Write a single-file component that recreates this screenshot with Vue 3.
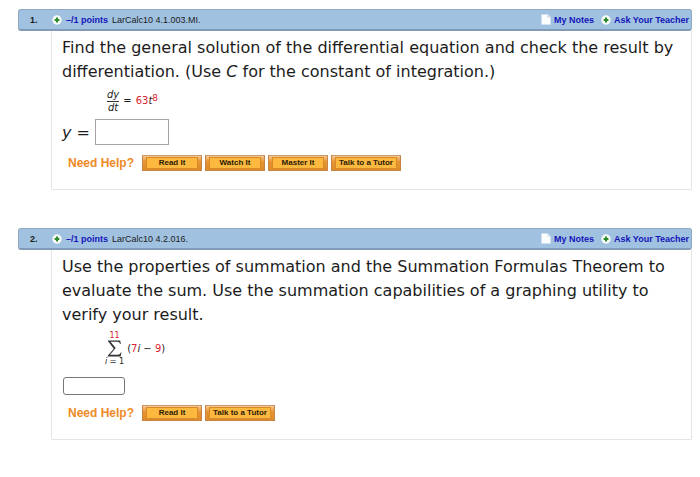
<script setup>
import { ref } from 'vue'

const antiderivative = ref('')
const sum = ref('')

const helpFirst = ['Read It', 'Watch It', 'Master It', 'Talk to a Tutor']
const helpSecond = ['Read It', 'Talk to a Tutor']

const questions = [
  { id: 1, source: 'LarCalc10 4.1.003.MI.', help: helpFirst },
  { id: 2, source: 'LarCalc10 4.2.016.', help: helpSecond },
]
</script>

<template>
  <main class="page">
    <section v-for="q in questions" :key="q.id" class="question">
      <header class="bar">
        <span class="number">{{ q.id }}.</span>
        <a href="#" class="points">
          <svg class="plus" viewBox="0 0 10 10" aria-hidden="true">
            <circle cx="5" cy="5" r="4.7" fill="#f6faf6" />
            <path d="M5 2.6V7.4M2.6 5H7.4" stroke="#2c8a2c" stroke-width="2" />
          </svg>
          <span>–/1 points</span>
        </a>
        <span class="source">{{ q.source }}</span>
        <nav class="links">
          <a href="#">
            <svg class="note" viewBox="0 0 10 11" aria-hidden="true">
              <path d="M.5 .5H6.8L9.5 3.2V10.5H.5Z" fill="#fcfdff" stroke="#d3dfec" stroke-width=".7" />
              <path d="M6.8 .5V3.2H9.5" fill="#dfe8f2" stroke="#c3d0de" stroke-width=".6" />
            </svg>
            <span>My Notes</span>
          </a>
          <a href="#">
            <svg class="plus" viewBox="0 0 10 10" aria-hidden="true">
              <circle cx="5" cy="5" r="4.7" fill="#f6faf6" />
              <path d="M5 2.6V7.4M2.6 5H7.4" stroke="#2c8a2c" stroke-width="2" />
            </svg>
            <span>Ask Your Teacher</span>
          </a>
        </nav>
      </header>

      <div class="body">
        <template v-if="q.id === 1">
          <p class="prompt">
            <span>Find the general solution of the differential equation and check the result by </span>
            <span>differentiation. (Use </span><i>C</i><span> for the constant of integration.)</span>
          </p>
          <div class="equation">
            <span class="fraction"><i class="top">dy</i><i>dt</i></span>
            <span>=</span>
            <span class="red">63<i class="dark">t</i><sup>8</sup></span>
          </div>
          <div class="answer">
            <label for="answer-y"><i>y</i> =</label>
            <input id="answer-y" v-model="antiderivative" class="box" type="text" />
          </div>
        </template>
        <template v-else>
          <p class="prompt">
            Use the properties of summation and the Summation Formulas Theorem to
            evaluate the sum. Use the summation capabilities of a graphing utility to
            verify your result.
          </p>
          <div class="equation series">
            <span class="sigma">
              <span class="red">11</span>
              <svg viewBox="0 0 15 17" aria-hidden="true">
                <path d="M1 .5H13.2L13.8 4H13.1Q12.6 1.7 10.5 1.7H3.5L8.7 8L3 14.8H10.8Q13 14.8 13.8 12.4H14.5L13.6 16.5H.5V16L6.8 8.7L1 1.2Z" fill="#333" />
              </svg>
              <span><i>i</i> = 1</span>
            </span>
            <span>(<span class="red">7</span><i>i</i> − <span class="red">9</span>)</span>
          </div>
          <div class="answer compact">
            <input v-model="sum" class="box rounded" type="text" aria-label="Sum" />
          </div>
        </template>

        <div class="help">
          <span class="help-title">Need Help?</span>
          <button v-for="label in q.help" :key="label" type="button">
            <span>{{ label }}</span>
          </button>
        </div>
      </div>
    </section>
  </main>
</template>

<style>
body {
  margin: 0;
  background: #fff;
}
</style>

<style scoped>
.page {
  padding: 9px 8px 36px 18px;
  font-family: "DejaVu Sans", Verdana, sans-serif;
  color: #1c1c1c;
}
.question + .question {
  margin-top: 38px;
}
.bar {
  box-sizing: border-box;
  display: flex;
  align-items: center;
  height: 22px;
  padding: 0 2px 0 11px;
  border: 1px solid #8fa9c2;
  border-bottom: 2px solid #809ab8;
  border-radius: 3px;
  background: #a0c2e0;
  font: 9px "Liberation Sans", Arial, sans-serif;
  white-space: nowrap;
}
.number {
  width: 22px;
  font-weight: bold;
}
.bar a {
  display: flex;
  align-items: center;
  gap: 4px;
  color: #1414b8;
  font-weight: bold;
  text-decoration: none;
}
.plus {
  width: 10px;
  height: 10px;
}
.note {
  width: 10px;
  height: 11px;
}
.source {
  margin-left: 4px;
}
.bar .links {
  display: flex;
  gap: 7px;
  margin-left: auto;
}
.bar .links a {
  gap: 3px;
}
.body {
  margin-left: 33px;
  padding: 5px 11px 18px 10px;
  border: 1px solid #e4e4e4;
  border-top: 0;
  border-radius: 0 0 2px 2px;
}
.prompt {
  margin: 0;
  font-size: 16px;
  line-height: 24px;
}
.equation {
  display: flex;
  align-items: center;
  gap: 4px;
  height: 28px;
  margin: 3px 0 0 45px;
  font-size: 10px;
  line-height: 12px;
}
.fraction {
  display: flex;
  flex-direction: column;
  align-items: center;
}
.top {
  border-bottom: 1px solid #333;
}
.red {
  color: #dc2430;
}
.dark {
  color: #3a1c1c;
}
sup {
  font-size: 9px;
  line-height: 0;
  vertical-align: 3px;
}
.answer {
  display: flex;
  align-items: center;
  gap: 5px;
  margin-top: 4px;
  font-size: 16px;
}
.compact {
  margin-top: 11px;
}
.box {
  box-sizing: border-box;
  width: 74px;
  height: 26px;
  padding: 2px 4px;
  border: 1px solid #a4a4a4;
  background: #fff;
  font: 14px "DejaVu Sans", Verdana, sans-serif;
}
.rounded {
  width: 62px;
  height: 18px;
  margin-left: 1px;
  border-color: #777;
  border-radius: 3px;
}
.equation.series {
  gap: 3px;
  height: 35px;
  margin: 4px 0 0 43px;
}
.sigma {
  display: flex;
  flex-direction: column;
  align-items: center;
  font-size: 8px;
  line-height: 9px;
}
.sigma svg {
  width: 15px;
  height: 17px;
}
.help {
  display: flex;
  align-items: center;
  gap: 3px;
  margin: 10px 0 0 6px;
}
.help-title {
  margin-right: 5px;
  color: #ee8a26;
  font: bold 12px/16px "Liberation Sans", Arial, sans-serif;
}
button {
  box-sizing: border-box;
  display: flex;
  min-width: 60px;
  height: 16px;
  padding: 1px 3px;
  border: 1px solid #c88444;
  border-top-color: #cc9a68;
  background: linear-gradient(#f6c996, #e69534 40%, #e08a28);
  color: #2c1c04;
  font: bold 8px/10px "Liberation Sans", Arial, sans-serif;
}
button span {
  flex: 1;
  padding: 0 3px;
  border: 1px solid #d98a26;
  background: #fdb840;
  white-space: nowrap;
}
</style>
